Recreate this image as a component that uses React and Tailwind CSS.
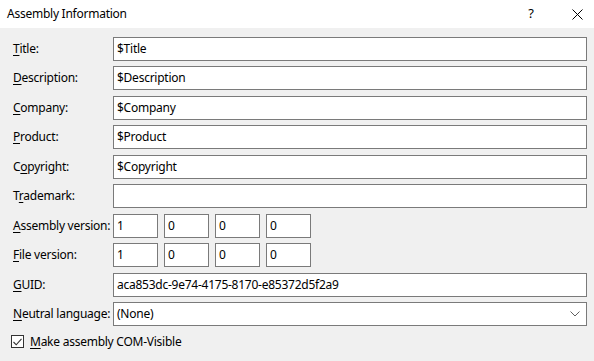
import { useState } from "react";

const font = { fontFamily: '"Noto Sans", "Segoe UI", sans-serif' };

// label text split around the access-key letter
const rows = [
  { pre: "", key: "T", post: "itle:", value: "$Title" },
  { pre: "", key: "D", post: "escription:", value: "$Description" },
  { pre: "", key: "C", post: "ompany:", value: "$Company" },
  { pre: "", key: "P", post: "roduct:", value: "$Product" },
  { pre: "C", key: "o", post: "pyright:", value: "$Copyright" },
  { pre: "T", key: "r", post: "ademark:", value: "" },
];

function Label({ pre, k, post }) {
  return (
    <span className="text-[12px] text-black whitespace-nowrap tracking-[-0.25px]">
      {pre}
      <span className="underline underline-offset-2">{k}</span>
      {post}
    </span>
  );
}

function Box({ children, className = "" }) {
  return (
    <div
      className={`h-6 bg-white border border-[#7a7a7a] flex items-center pl-[3px] text-[12px] text-black tracking-[-0.25px] ${className}`}
    >
      {children}
    </div>
  );
}

function Version({ parts }) {
  return (
    <div className="flex gap-[6px]">
      {parts.map((p, i) => (
        <Box key={i} className="w-[45px]">{p}</Box>
      ))}
    </div>
  );
}

export default function App() {
  const [checked, setChecked] = useState(true);

  return (
    <div className="w-[594px] h-[361px] bg-[#f0f0f0] flex flex-col overflow-hidden" style={font}>
      {/* Title bar */}
      <div className="h-[28px] bg-white flex items-center pl-[7px] shrink-0">
        <span className="text-[12px] text-black flex-1 tracking-[-0.25px]">Assembly Information</span>
        <span className="text-[13px] text-black w-[46px] text-center">?</span>
        <span className="w-[46px] shrink-0 mr-[-6px] flex justify-center">
          <svg width="11" height="11" viewBox="0 0 11 11">
            <path d="M0.5 0.5L10.5 10.5M10.5 0.5L0.5 10.5" stroke="#000" strokeWidth="1" />
          </svg>
        </span>
      </div>

      {/* Form */}
      <div className="grid grid-cols-[100px_474px] gap-y-[5.45px] pl-[13px] pt-[9px]">
        {rows.map((r) => (
          <div key={r.post} className="contents">
            <div className="h-6 flex items-center">
              <Label pre={r.pre} k={r.key} post={r.post} />
            </div>
            <Box>{r.value}</Box>
          </div>
        ))}

        <div className="h-6 flex items-center">
          <Label pre="" k="A" post="ssembly version:" />
        </div>
        <Version parts={["1", "0", "0", "0"]} />

        <div className="h-6 flex items-center">
          <Label pre="" k="F" post="ile version:" />
        </div>
        <Version parts={["1", "0", "0", "0"]} />

        <div className="h-6 flex items-center">
          <Label pre="" k="G" post="UID:" />
        </div>
        <Box>aca853dc-9e74-4175-8170-e85372d5f2a9</Box>

        <div className="h-6 flex items-center">
          <Label pre="" k="N" post="eutral language:" />
        </div>
        <Box className="justify-between pr-[6px]">
          <span>(None)</span>
          <svg width="10" height="6" viewBox="0 0 10 6">
            <path d="M0.5 0.5L5 5L9.5 0.5" fill="none" stroke="#606060" strokeWidth="1" />
          </svg>
        </Box>
      </div>

      {/* Checkbox */}
      <label className="flex items-center gap-[6px] pl-[11px] mt-[7px] cursor-default" onClick={() => setChecked(!checked)}>
        <span className="w-[13px] h-[13px] border border-[#333] bg-white flex items-center justify-center">
          {checked && (
            <svg width="9" height="8" viewBox="0 0 9 8">
              <path d="M0.5 4L3.2 6.8L8.5 0.8" fill="none" stroke="#333" strokeWidth="1.1" />
            </svg>
          )}
        </span>
        <Label pre="" k="M" post="ake assembly COM-Visible" />
      </label>
    </div>
  );
}
